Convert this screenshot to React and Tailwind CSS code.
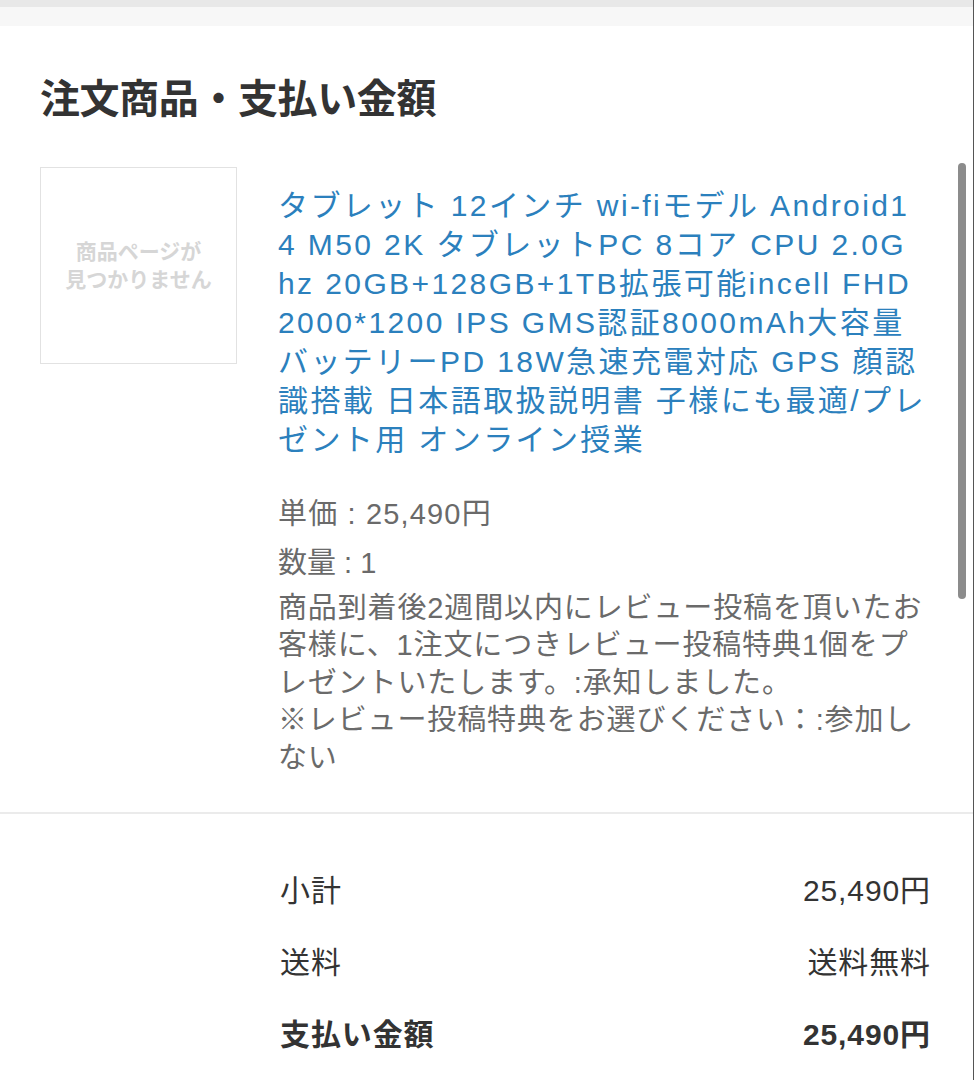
import React from 'react';

const titleLines = [
    'タブレット 12インチ wi-fiモデル Android1',
    '4 M50 2K タブレットPC 8コア CPU 2.0G',
    'hz 20GB+128GB+1TB拡張可能incell FHD',
    '2000*1200 IPS GMS認証8000mAh大容量',
    'バッテリーPD 18W急速充電対応 GPS 顔認',
    '識搭載 日本語取扱説明書 子様にも最適/プレ',
    'ゼント用 オンライン授業',
];

const noteLines = [
    '商品到着後2週間以内にレビュー投稿を頂いたお',
    '客様に、1注文につきレビュー投稿特典1個をプ',
    'レゼントいたします。:承知しました。',
    '※レビュー投稿特典をお選びください：:参加し',
    'ない',
];

const summary = [
    { label: '小計', value: '25,490円' },
    { label: '送料', value: '送料無料' },
    { label: '支払い金額', value: '25,490円', bold: true },
];

export default function App() {
    return (
        <div className="relative min-h-screen bg-white border-r border-[#555] font-['Liberation_Sans','Noto_Sans_CJK_JP',sans-serif] overflow-hidden">
            <div className="h-[26px] bg-[#f7f7f7] border-t-[7px] border-[#e8e8e8]" />

            <section className="pl-[40px] pr-[44px]">
                <h2 className="pt-[49px] text-[40px] leading-[48px] font-bold text-[#333] tracking-[-0.01em]">注文商品・支払い金額</h2>

                <div className="mt-[44px] flex gap-[41px]">
                    <div className="w-[197px] h-[197px] shrink-0 border border-[#e2e2e2] flex items-center justify-center text-center text-[21px] leading-[28px] font-bold text-[#d6d6d6]">
                        <div>
                            商品ページが<br />見つかりません
                        </div>
                    </div>

                    <div className="flex-1 pt-[19px]">
                        <a href="#" className="block text-[30px] leading-[39px] text-[#2b80bd] tracking-[0.08em]">
                            {titleLines.map((line, i) => (
                                <span key={i} className="block whitespace-nowrap">{line}</span>
                            ))}
                        </a>

                        <div className="mt-[37px] text-[29px] leading-[37.5px] text-[#6a6a6a]">
                            <p className="tracking-[0.04em]">単価 : 25,490円</p>
                            <p className="mt-[11px]">数量 : 1</p>
                            <p className="mt-[7.5px] tracking-[0.03em]">
                                {noteLines.map((line, i) => (
                                    <span key={i} className="block whitespace-nowrap">{line}</span>
                                ))}
                            </p>
                        </div>
                    </div>
                </div>
            </section>

            <div className="mt-[35px] h-[2px] bg-[#ebebeb]" />

            <div className="pl-[280px] pr-[42px] pt-[57px] flex flex-col gap-[32px] text-[30px] leading-[40px] text-[#333] tracking-[0.03em]">
                {summary.map((row) => (
                    <div key={row.label} className={`flex justify-between ${row.bold ? 'font-bold' : ''}`}>
                        <span>{row.label}</span>
                        <span>{row.value}</span>
                    </div>
                ))}
            </div>

            {/* overlay scrollbar */}
            <div className="absolute left-[958px] top-[163px] w-[8px] h-[436px] rounded-full bg-[#8c8c8c]" />
        </div>
    );
}
